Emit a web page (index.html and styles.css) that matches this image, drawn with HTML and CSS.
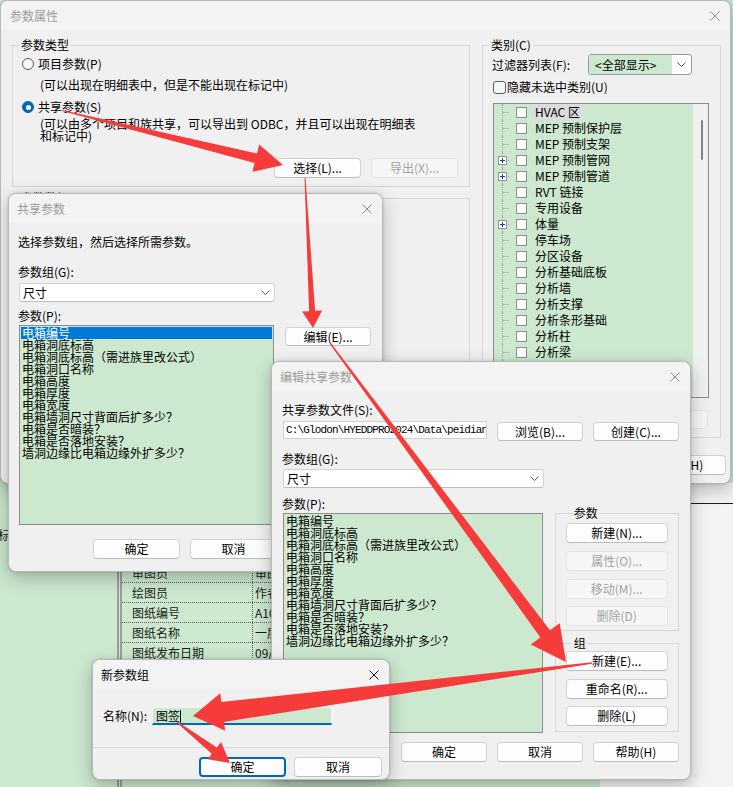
FILE: index.html
```html
<!DOCTYPE html>
<html>
<head>
<meta charset="utf-8">
<link rel="stylesheet" href="styles.css">
</head>
<body>
<div class="desk">

    <!-- revit properties panel behind the dialogs -->
    <div class="rvt-side">标</div>
    <div class="rvt-grid">
        <div class="rvt-row"><span class="k">审图员</span><span class="v">审图员</span></div>
        <div class="rvt-row"><span class="k">绘图员</span><span class="v">作者</span></div>
        <div class="rvt-row"><span class="k">图纸编号</span><span class="v">A101</span></div>
        <div class="rvt-row"><span class="k">图纸名称</span><span class="v">一层平面图</span></div>
        <div class="rvt-row"><span class="k">图纸发布日期</span><span class="v">09/11/24</span></div>
    </div>
    <div class="rvt-right"><div class="rvt-rule"></div></div>

    <!-- 参数属性 -->
    <div class="win main-win">
        <div class="titlebar main-title">
            <span class="title">参数属性</span>
            <svg class="x" viewBox="0 0 10 10"><path d="M0.5 0.5L9.5 9.5M9.5 0.5L0.5 9.5"/></svg>
        </div>
        <div class="main-body">
            <div class="main-cols">
                <div class="main-left">
                    <fieldset class="group g-type">
                        <legend>参数类型</legend>
                        <div class="type-in">
                            <div class="opt"><span class="radio"></span>项目参数(P)</div>
                            <div class="desc">(可以出现在明细表中，但是不能出现在标记中)</div>
                            <div class="opt opt2"><span class="radio on"></span>共享参数(S)</div>
                            <div class="desc desc2">(可以由多个项目和族共享，可以导出到 ODBC，并且可以出现在明细表<br>和标记中)</div>
                            <div class="btnrow">
                                <button class="btn">选择(L)...</button>
                                <button class="btn off">导出(X)...</button>
                            </div>
                        </div>
                    </fieldset>
                    <fieldset class="group g-data">
                        <legend>参数数据</legend>
                    </fieldset>
                </div>
                <div class="main-right">
                    <fieldset class="group g-cat">
                        <legend>类别(C)</legend>
                        <div class="filter-row">
                            <span>过滤器列表(F):</span>
                            <div class="fcombo">
                                <span class="fval">&lt;全部显示&gt;</span>
                                <span class="fdrop"><svg class="chev" viewBox="0 0 9 5"><path d="M0.5 0.5L4.5 4.5L8.5 0.5"/></svg></span>
                            </div>
                        </div>
                        <div class="check-row"><span class="check"></span>隐藏未选中类别(U)</div>
                        <div class="tree">
                            <div class="tree-items">
                                <div class="node"><span class="box"></span><span class="node-text"><span class="hl">HVAC 区</span></span></div>
                                <div class="node"><span class="box"></span><span class="node-text">MEP 预制保护层</span></div>
                                <div class="node"><span class="box"></span><span class="node-text">MEP 预制支架</span></div>
                                <div class="node"><span class="plus"></span><span class="box"></span><span class="node-text">MEP 预制管网</span></div>
                                <div class="node"><span class="plus"></span><span class="box"></span><span class="node-text">MEP 预制管道</span></div>
                                <div class="node"><span class="box"></span><span class="node-text">RVT 链接</span></div>
                                <div class="node"><span class="box"></span><span class="node-text">专用设备</span></div>
                                <div class="node"><span class="plus"></span><span class="box"></span><span class="node-text">体量</span></div>
                                <div class="node"><span class="box"></span><span class="node-text">停车场</span></div>
                                <div class="node"><span class="box"></span><span class="node-text">分区设备</span></div>
                                <div class="node"><span class="box"></span><span class="node-text">分析基础底板</span></div>
                                <div class="node"><span class="box"></span><span class="node-text">分析墙</span></div>
                                <div class="node"><span class="box"></span><span class="node-text">分析支撑</span></div>
                                <div class="node"><span class="box"></span><span class="node-text">分析条形基础</span></div>
                                <div class="node"><span class="box"></span><span class="node-text">分析柱</span></div>
                                <div class="node"><span class="box"></span><span class="node-text">分析梁</span></div>
                                <div class="node"><span class="box"></span><span class="node-text">分析楼层</span></div>
                                <div class="node"><span class="box"></span><span class="node-text">分析楼板</span></div>
                            </div>
                            <div class="tree-bar"><div class="thumb"></div></div>
                        </div>
                        <div class="cat-foot"><button class="btn off cat-btn">全部不选(N)</button></div>
                    </fieldset>
                </div>
            </div>
            <div class="main-foot">
                <button class="btn">确定</button>
                <button class="btn">取消</button>
                <button class="btn">帮助(H)</button>
            </div>
        </div>
    </div>

    <!-- 共享参数 -->
    <div class="win share-win">
        <div class="titlebar">
            <span class="title">共享参数</span>
            <svg class="x" viewBox="0 0 10 10"><path d="M0.5 0.5L9.5 9.5M9.5 0.5L0.5 9.5"/></svg>
        </div>
        <div class="share-body">
            <div class="lead">选择参数组，然后选择所需参数。</div>
            <div class="lbl share-lbl1">参数组(G):</div>
            <div class="combo share-combo"><span>尺寸</span><svg class="chev" viewBox="0 0 9 5"><path d="M0.5 0.5L4.5 4.5L8.5 0.5"/></svg></div>
            <div class="lbl share-lbl2">参数(P):</div>
            <div class="share-row">
                <div class="plist share-list">
                    <div class="sel">电箱编号</div>
                    <div>电箱洞底标高</div>
                    <div>电箱洞底标高（需进族里改公式）</div>
                    <div>电箱洞口名称</div>
                    <div>电箱高度</div>
                    <div>电箱厚度</div>
                    <div>电箱宽度</div>
                    <div>电箱墙洞尺寸背面后扩多少？</div>
                    <div>电箱是否暗装？</div>
                    <div>电箱是否落地安装？</div>
                    <div>墙洞边缘比电箱边缘外扩多少？</div>
                </div>
                <button class="btn edit-btn">编辑(E)...</button>
            </div>
            <div class="foot share-foot">
                <button class="btn">确定</button>
                <button class="btn">取消</button>
                <button class="btn">帮助(H)</button>
            </div>
        </div>
    </div>

    <!-- 编辑共享参数 -->
    <div class="win edit-win">
        <div class="titlebar">
            <span class="title">编辑共享参数</span>
            <svg class="x" viewBox="0 0 10 10"><path d="M0.5 0.5L9.5 9.5M9.5 0.5L0.5 9.5"/></svg>
        </div>
        <div class="edit-body">
            <div class="lbl edit-lbl1">共享参数文件(S):</div>
            <div class="path-row">
                <div class="path">C:\Glodon\HYEDDPRO2024\Data\peidian.txt</div>
                <button class="btn pbtn">浏览(B)...</button>
                <button class="btn pbtn">创建(C)...</button>
            </div>
            <div class="lbl edit-lbl2">参数组(G):</div>
            <div class="combo edit-combo"><span>尺寸</span><svg class="chev" viewBox="0 0 9 5"><path d="M0.5 0.5L4.5 4.5L8.5 0.5"/></svg></div>
            <div class="edit-row">
                <div class="edit-left">
                    <div class="lbl">参数(P):</div>
                    <div class="plist edit-list">
                        <div>电箱编号</div>
                        <div>电箱洞底标高</div>
                        <div>电箱洞底标高（需进族里改公式）</div>
                        <div>电箱洞口名称</div>
                        <div>电箱高度</div>
                        <div>电箱厚度</div>
                        <div>电箱宽度</div>
                        <div>电箱墙洞尺寸背面后扩多少？</div>
                        <div>电箱是否暗装？</div>
                        <div>电箱是否落地安装？</div>
                        <div>墙洞边缘比电箱边缘外扩多少？</div>
                    </div>
                </div>
                <div class="edit-right">
                    <fieldset class="group g-side g-param">
                        <legend>参数</legend>
                        <button class="btn sbtn">新建(N)...</button>
                        <button class="btn sbtn off">属性(O)...</button>
                        <button class="btn sbtn off">移动(M)...</button>
                        <button class="btn sbtn off s-last">删除(D)</button>
                    </fieldset>
                    <fieldset class="group g-side g-grp">
                        <legend>组</legend>
                        <button class="btn sbtn">新建(E)...</button>
                        <button class="btn sbtn">重命名(R)...</button>
                        <button class="btn sbtn s-last">删除(L)</button>
                    </fieldset>
                </div>
            </div>
            <div class="foot edit-foot">
                <button class="btn">确定</button>
                <button class="btn">取消</button>
                <button class="btn">帮助(H)</button>
            </div>
        </div>
    </div>

    <!-- 新参数组 -->
    <div class="win new-win active">
        <div class="titlebar">
            <span class="title">新参数组</span>
            <svg class="x" viewBox="0 0 10 10"><path d="M0.5 0.5L9.5 9.5M9.5 0.5L0.5 9.5"/></svg>
        </div>
        <div class="new-body">
            <div class="name-row">
                <span class="name-lbl">名称(N):</span>
                <div class="name-input">图签<span class="caret"></span></div>
            </div>
            <div class="sep"></div>
            <div class="foot new-foot">
                <button class="btn focus">确定</button>
                <button class="btn">取消</button>
            </div>
        </div>
    </div>

    <!-- red arrows drawn over the screenshot -->
    <svg class="arrows" viewBox="0 0 733 787">
        <polygon points="62,110 257,153.4 259.2,144.6 283,165 252.4,171.8 254.6,163.1 62,111"/>
        <polygon points="304.5,178 305.5,178 315.1,310.8 322.1,310.5 313,328 302.1,311.5 309.1,311.2"/>
        <polygon points="330.5,342.6 550,630.3 559.7,623.2 566,662 530.7,644.6 540.4,637.4 329.5,343.4"/>
        <polygon points="591.9,662.2 221.4,702.1 220.2,693.2 193,716 225.2,730.8 224,721.9 592.1,663.8"/>
        <polygon points="177.4,721.5 216.8,747.5 221.1,742 230,763 207.5,759.2 211.8,753.7 176.6,722.5"/>
    </svg>
</div>
</body>
</html>
```

FILE: styles.css
```css
* {
    box-sizing: border-box;
}

body {
    margin: 0;
    font-family: "Noto Sans CJK SC", "Liberation Sans", sans-serif;
    font-size: 12px;
    line-height: 16px;
    color: #000;
}

.desk {
    position: relative;
    width: 733px;
    height: 787px;
    overflow: hidden;
    background: #cce8cf;
}

/* revit panel behind */
.rvt-side {
    position: absolute;
    left: -2px;
    top: 527px;
    color: #222;
}

.rvt-grid {
    position: absolute;
    left: 117px;
    top: 483px;
    width: 300px;
    height: 304px;
    padding-top: 80px;
    border-left: 5px double #9c9c9c;
    background: #cce8cf;
}

.rvt-row {
    display: flex;
    height: 20px;
    line-height: 19px;
    border-bottom: 1px dotted #5c5c5c;
    color: #1a1a1a;
}

.rvt-row .k {
    width: 130px;
    padding-left: 10px;
}

.rvt-row .v {
    border-left: 1px dotted #5c5c5c;
    padding-left: 2px;
}

.rvt-right {
    position: absolute;
    left: 600px;
    top: 483px;
    width: 133px;
    height: 304px;
    background: #f3f3f3;
}

.rvt-rule {
    margin-top: 20px;
    border-top: 1px solid #1e1e1e;
}

/* windows */
.win {
    position: absolute;
    display: flex;
    flex-direction: column;
    background: #f0f0f0;
    border: 1px solid #b8b8b8;
    border-radius: 8px;
    box-shadow: 0 6px 18px rgba(0, 0, 0, 0.25), 0 0 3px rgba(0, 0, 0, 0.15);
    overflow: hidden;
}

.titlebar {
    height: 29px;
    flex: none;
    display: flex;
    align-items: center;
    justify-content: space-between;
    padding: 0 10px 0 8px;
    background: #f3f3f3;
}

.main-title {
    padding-left: 9px;
}

.title {
    color: #9c9c9c;
}

.x {
    width: 10px;
    height: 10px;
    fill: none;
    stroke: #8c8c8c;
    stroke-width: 1;
}

.active .title {
    color: #000;
}

.active .x {
    stroke: #1a1a1a;
}

.btn {
    height: 20px;
    padding: 0;
    display: flex;
    align-items: center;
    justify-content: center;
    font: inherit;
    color: #000;
    background: #fdfdfd;
    border: 1px solid #d2d2d2;
    border-bottom-color: #bcbcbc;
    border-radius: 4px;
}

.btn.off {
    color: #a3a3a3;
    background: #f6f6f6;
    border-color: #e4e4e4;
}

.btn.focus {
    border: 2px solid #0067c0;
}

.group {
    margin: 0;
    padding: 0;
    min-width: 0;
    border: 1px solid #d6d6d6;
}

.group legend {
    margin-left: 6px;
    padding: 0 2px;
    line-height: 16px;
}

.radio {
    width: 12px;
    height: 12px;
    flex: none;
    border-radius: 50%;
    border: 1px solid #5d5d5d;
    background: #f6f6f6;
}

.radio.on {
    display: flex;
    align-items: center;
    justify-content: center;
    border-color: #0067c0;
    background: #0067c0;
}

.radio.on::after {
    content: "";
    width: 5px;
    height: 5px;
    border-radius: 50%;
    background: #fff;
}

.check {
    width: 13px;
    height: 13px;
    flex: none;
    border: 1px solid #5d5d5d;
    border-radius: 3px;
    background: #f6f6f6;
}

.combo {
    height: 19px;
    display: flex;
    align-items: center;
    justify-content: space-between;
    padding: 0 4px 0 3px;
    background: #fff;
    border: 1px solid #d3d3d3;
    border-bottom-color: #bdbdbd;
    border-radius: 3px;
}

.chev {
    width: 9px;
    height: 5px;
    fill: none;
    stroke: #5c5c5c;
    stroke-width: 1;
}

.plist {
    padding: 1px 1px 0 1px;
    background: #cce8cf;
    border: 1px solid #8c8c8c;
    line-height: 12px;
    overflow: hidden;
}

.plist div {
    height: 12px;
    padding-left: 1px;
    white-space: nowrap;
}

.plist .sel {
    background: #0078d7;
    color: #fff;
}

.foot {
    display: flex;
    justify-content: flex-end;
    gap: 10px;
}

.foot .btn {
    width: 87px;
}

/* main dialog */
.main-win {
    left: 0;
    top: 0;
    width: 731px;
    height: 484px;
}

.main-body {
    padding-top: 7px;
}

.main-cols {
    display: flex;
    padding-left: 11px;
}

.main-left {
    width: 458px;
    display: flex;
    flex-direction: column;
}

.main-right {
    width: 239px;
    margin-left: 12px;
}

.type-in {
    padding: 3px 0 8px 0;
}

.opt {
    height: 16px;
    display: flex;
    align-items: center;
    gap: 4px;
    margin-left: 9px;
}

.opt2 {
    margin-top: 6px;
}

.desc {
    margin: 5px 0 0 27px;
}

.desc2 {
    margin-top: 3px;
    line-height: 12px;
}

.btnrow {
    display: flex;
    justify-content: flex-end;
    gap: 10px;
    margin-top: 16px;
    padding-right: 11px;
}

.btnrow .btn {
    width: 87px;
}

.g-data {
    flex: 1;
    margin-top: 3px;
}

.filter-row {
    height: 21px;
    margin-top: 1px;
    display: flex;
    align-items: center;
    padding: 0 28px 0 9px;
}

.fcombo {
    margin-left: auto;
    width: 104px;
    height: 21px;
    display: flex;
    border: 1px solid #9a9a9a;
    border-radius: 3px;
    background: #fff;
    overflow: hidden;
}

.fval {
    flex: 1;
    padding-left: 6px;
    line-height: 19px;
    background: #cce8cf;
}

.fdrop {
    width: 19px;
    display: flex;
    align-items: center;
    justify-content: center;
}

.check-row {
    height: 16px;
    margin: 4px 0 0 10px;
    display: flex;
    align-items: center;
    gap: 1px;
}

.tree {
    width: 216px;
    height: 295px;
    margin: 8px 0 0 10px;
    display: flex;
    border: 1px solid #8c8c8c;
    background: #cce8cf;
    overflow: hidden;
}

.tree-items {
    flex: 1;
}

.tree-bar {
    width: 15px;
    background: #f0f0f0;
}

.thumb {
    width: 2px;
    height: 40px;
    margin: 16px 0 0 8px;
    border-radius: 1px;
    background: #858585;
}

.node {
    position: relative;
    height: 16px;
    display: flex;
    align-items: center;
    padding-left: 22px;
    white-space: nowrap;
}

.node::before {
    content: "";
    position: absolute;
    left: 8px;
    top: 0;
    bottom: 0;
    border-left: 1px dotted #a3a3a3;
}

.node::after {
    content: "";
    position: absolute;
    left: 9px;
    top: 8px;
    width: 6px;
    border-top: 1px dotted #a3a3a3;
}

.box {
    width: 11px;
    height: 11px;
    flex: none;
    border: 1px solid #8d8d8d;
    background: #fff;
}

.node-text {
    margin-left: 8px;
}

.hl {
    display: inline-block;
    margin-left: -3px;
    padding: 0 3px;
    line-height: 16px;
    background: #dcdcdc;
}

.plus {
    position: absolute;
    left: 4px;
    top: 4px;
    width: 9px;
    height: 9px;
    z-index: 1;
    border: 1px solid #939393;
    background: #fff;
}

.plus::before {
    content: "";
    position: absolute;
    left: 1px;
    top: 3px;
    width: 5px;
    height: 1px;
    background: #1f3f9b;
}

.plus::after {
    content: "";
    position: absolute;
    left: 3px;
    top: 1px;
    width: 1px;
    height: 5px;
    background: #1f3f9b;
}

.cat-foot {
    display: flex;
    justify-content: flex-end;
    margin-top: 12px;
    padding: 0 12px 8px 0;
}

.cat-btn {
    width: 128px;
    height: 19px;
}

.main-foot {
    display: flex;
    justify-content: flex-end;
    gap: 10px;
    margin-top: 17px;
    padding-right: 4px;
}

.main-foot .btn {
    width: 86px;
}

/* 共享参数 */
.share-win {
    left: 8px;
    top: 193px;
    width: 375px;
    height: 379px;
}

.share-body {
    padding: 0 8px 0 10px;
}

.lead {
    margin: 11px 0 0 -1px;
}

.lbl {
    margin-left: -1px;
}

.share-lbl1 {
    margin-top: 14px;
}

.share-combo {
    width: 256px;
    margin-top: 3px;
}

.share-lbl2 {
    margin-top: 6px;
}

.share-row {
    display: flex;
    align-items: flex-start;
    margin-top: 1px;
}

.share-list {
    width: 255px;
    height: 200px;
}

.edit-btn {
    width: 86px;
    height: 19px;
    margin: 2px 0 0 11px;
}

.share-foot {
    margin-top: 14px;
}

/* 编辑共享参数 */
.edit-win {
    left: 271px;
    top: 361px;
    width: 420px;
    height: 419px;
}

.edit-body {
    padding: 0 11px;
}

.edit-lbl1 {
    margin-top: 11px;
}

.path-row {
    display: flex;
    align-items: flex-start;
    margin-top: 3px;
    height: 20px;
}

.path {
    width: 204px;
    height: 18px;
    padding-left: 2px;
    background: #fff;
    border: 1px solid #d0d0d0;
    font-family: "Liberation Mono", monospace;
    font-size: 11px;
    letter-spacing: -0.85px;
    line-height: 16px;
    white-space: nowrap;
    overflow: hidden;
}

.pbtn {
    width: 86px;
    height: 19px;
    margin: 1px 0 0 10px;
}

.edit-lbl2 {
    margin-top: 10px;
}

.edit-combo {
    width: 261px;
    margin-top: 2px;
}

.edit-row {
    display: flex;
    margin-top: 8px;
}

.edit-left {
    width: 261px;
}

.edit-list {
    height: 220px;
    margin-top: 1px;
}

.edit-right {
    width: 125px;
    margin-left: 12px;
}

.g-side {
    display: flex;
    flex-direction: column;
    padding: 0 0 4px 10px;
}

.g-param {
    margin-top: 9px;
}

.g-grp {
    margin-top: 4px;
    padding-bottom: 5px;
}

.sbtn {
    width: 102px;
    margin-top: 8px;
}

.g-param .sbtn:first-of-type {
    margin-top: 2px;
}

.g-grp .sbtn:first-of-type {
    margin-top: 0;
}

.sbtn.s-last {
    margin-top: 7px;
}

.edit-foot {
    margin-top: 9px;
}

.edit-foot .btn {
    width: 86px;
}

/* 新参数组 */
.new-win {
    left: 92px;
    top: 659px;
    width: 298px;
    height: 121px;
}

.new-body {
    display: flex;
    flex-direction: column;
}

.name-row {
    display: flex;
    align-items: center;
    margin-top: 18px;
    padding-left: 10px;
}

.name-lbl {
    width: 49px;
}

.name-input {
    width: 180px;
    height: 18px;
    padding-left: 3px;
    line-height: 15px;
    background: #cce8cf;
    border: 1px solid #f4f4f4;
    border-bottom: 2px solid #0067c0;
}

.caret {
    display: inline-block;
    width: 1px;
    height: 13px;
    vertical-align: -2px;
    background: #000;
}

.sep {
    margin-top: 22px;
    border-top: 1px solid #d6d6d6;
}

.new-foot {
    margin-top: 9px;
    gap: 8px;
    padding-right: 7px;
}

.new-foot .btn:last-child {
    width: 88px;
}

/* arrows */
.arrows {
    position: absolute;
    left: 0;
    top: 0;
    width: 733px;
    height: 787px;
    fill: #f63b3b;
    pointer-events: none;
}
```
